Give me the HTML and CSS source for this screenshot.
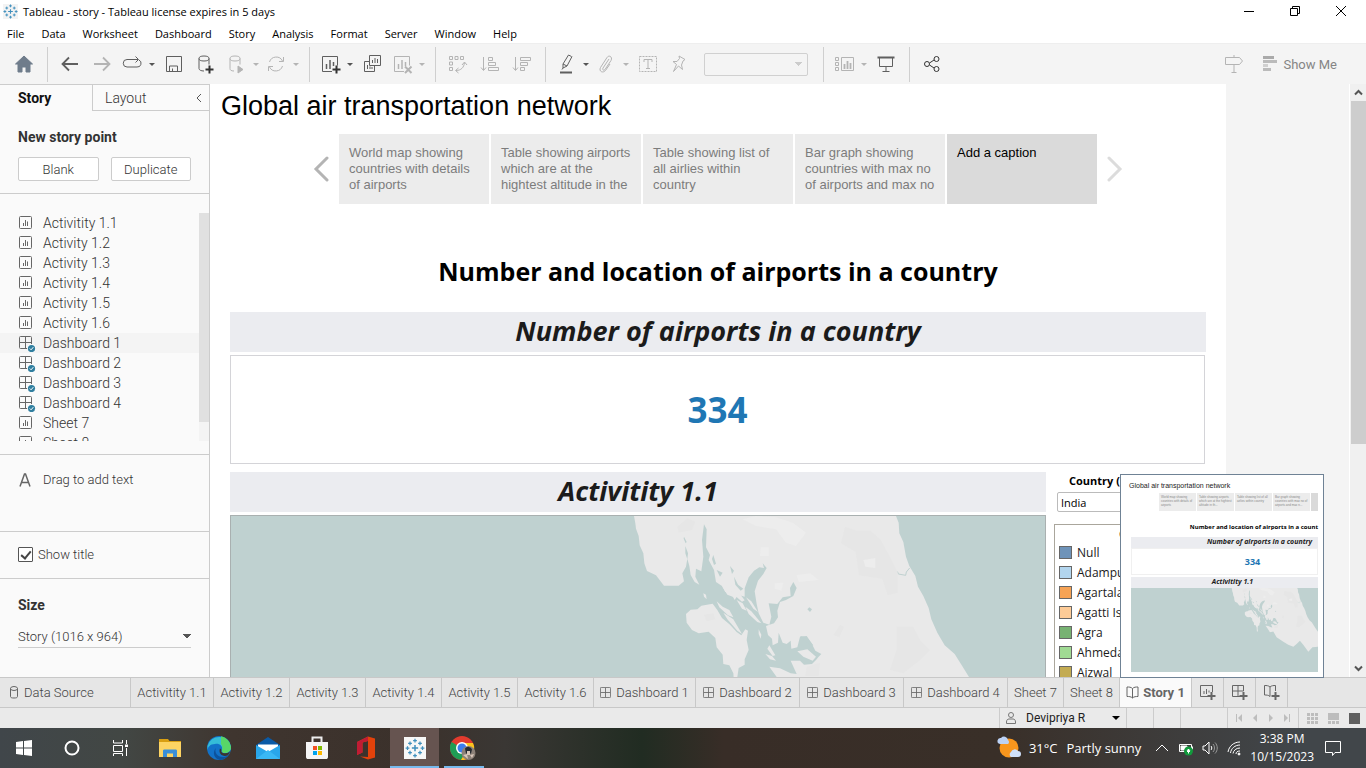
FILE: index.html
```html
<!DOCTYPE html>
<html lang="en">
<head>
<meta charset="utf-8">
<title>Tableau - story</title>
<link rel="stylesheet" href="styles.css">
</head>
<body>
<svg class="defs" aria-hidden="true">
  <defs>
    <g id="i-sheet" fill="none" stroke="#666"><rect x="1.500" y="1.500" width="12" height="12" rx="1"/><path d="M5.500 8v3M7.500 5v6M9.500 6.500v4.500" /></g>
    <g id="i-dash" fill="none" stroke="#666"><rect x="1.500" y="1.500" width="12" height="12" rx="1"/><path d="M7.500 2v11M2 7.500h11"/></g>
    <g id="i-done"><use href="#i-dash"/><circle cx="13.500" cy="13.500" r="4.500" fill="#fafafa"/><circle cx="13.500" cy="13.500" r="3.600" fill="#2f7e9f"/><path d="M11.800 13.500l1.300 1.300 2.200-2.600" fill="none" stroke="#fff"/></g>
    <g id="i-tableau" fill="none" stroke="#3f8fbd"><path d="M8 5.500v5M5.500 8h5" stroke-width="1.200"/><path d="M8 .5v3M6.500 2h3M8 12.500v3M6.500 14h3M2 6.500v3M.5 8h3M14 6.500v3M12.500 8h3M4 2.800v3M2.500 4.300h3M12 2.800v3M10.500 4.300h3M4 10.200v3M2.500 11.700h3M12 10.200v3M10.500 11.700h3"/></g>
    <g id="land">
      <path fill="#e9e9e9" d="M102 168L106 190L108 206L116 228L119 256L130 280L133 310L141 333L168 346L192 377L236 377L252 364L247 340L258 320L262 296L268 318L272 345L284 366L298 374L286 350L288 326L304 334L310 290L306 240L312 193L320 208L318 262L330 285L326 300L342 330L348 366L366 378L376 396L392 398L404 420L414 404L434 410L434 385L446 352L462 332L478 322L492 324L488 310L500 324L490 342L474 362L464 394L470 432L476 460L490 488L508 494L514 470L506 430L532 432L548 412L572 408L570 384L580 366L590 384L580 408L558 420L540 426L532 452L534 472L522 490L498 498L504 525L516 536L518 556L534 548L536 518L548 548L560 552L572 542L574 566L592 562L600 530L620 528L634 548L646 572L664 582L656 590L648 600L636 612L612 614L600 602L572 602L590 642L572 640L540 625L508 620L530 651L560 700L601 690L640 760L721 812L780 850L841 872L880 840L920 800L960 850L1021 932L1070 880L1137 872L1240 900L1240 800L1137 692L1107 651L1088 620L1064 582L1034 556L1012 518L994 478L986 444L970 408L954 380L946 348L928 318L918 290L910 246L898 220L896 188L888 168Z"/>
      <path fill="#e9e9e9" d="M258 462L272 449L292 448L304 437L338 431L352 450L366 474L390 494L410 516L424 526L436 508L444 512L440 540L446 570L434 598L434 614L416 624L412 651L416 690L404 690L400 640L388 616L370 612L368 584L350 562L346 534L326 515L296 520L276 510L260 488Z"/>
      <g fill="#e9e9e9">
        <path d="M310 400l8 4 2 14-8-8zM350 424l18 16 20 10 12 22-16-6-26-24zM366 378l24 10 12 24-20-8zM392 375l24 22 18 24-8 4-30-26zM410 420l18 10 12 22-14-6zM436 440l18 14 30 36-12-4-26-24zM438 412l16 12 20 32-14-10zM392 320l10 14-4 10-8-12zM370 458l30 20 26 44-14-10-30-34zM476 508l8 16-2 12-6-14zM496 582l20 6 12 14-18-4zM508 556l18 30-8 2-16-22zM592 574l30-6 26 22-10 12-28-12zM400 356l16 16 0 14-10-10z"/>
      </g>
      <g fill="#bfd1d0">
        <path d="M252 230l8 16-3 4-6-14zM256 258l8 22-2 18-6-18zM622 448l6-6 8 6-6 8zM340 285l8 26-6 4-6-18zM350 330l18 8-8 12zM600 528l20 4 20 24-6 2-18-16zM390 318l12 14-6 10zM402 350l12 24 16 12-8 6-16-18z"/>
        <path d="M883 334l10 2 2 6 22 4 2-10 10-12" fill="none" stroke="#bfd1d0" stroke-width="3"/>
      </g>
      <g fill="#e6e6e6">
        <path d="M232 200l30-25 24 10-10 25-40 8zM735 200l36 12 40 0 30 26 22 40 30 60v60l-30 8-16-50-70-10-10-70-44-26zM890 500l50 0 20 40 30 30-30 30-50 40-40-10 20-60zM700 525l20-30 12 5-14 32zM312 464l28-4 6 18-26 6zM620 620l40-12-4 40h-40z"/>
      </g>
      <g fill="#ededed"><path d="M428 178l40-10 60 4 50 16 40 30-30 40-30-10-30-40-60-10zM482 262l24 0 0 26-26 0zM590 345l40-5 26 20-60 6zM524 370l26-2-6 24-20-6zM790 300l36-6 0 30-30-4z"/></g>
    </g>
  </defs>
</svg>

<header class="titlebar">
  <svg class="app-icon" viewBox="0 0 16 16"><rect width="16" height="16" fill="#f3f3f3"/><use href="#i-tableau"/></svg>
  <span class="title-text">Tableau - story - Tableau license expires in 5 days</span>
  <button class="win" aria-label="Minimize"><svg viewBox="0 0 12 12"><path d="M1 6.500h10"/></svg></button>
  <button class="win" aria-label="Restore"><svg viewBox="0 0 12 12"><path d="M1.500 3.500h7v7h-7zM3.500 3v-1.500h7v7h-1.500"/></svg></button>
  <button class="win" aria-label="Close"><svg viewBox="0 0 12 12"><path d="M1 1l10 10M11 1L1 11"/></svg></button>
</header>

<nav class="menubar">
  <button>File</button><button>Data</button><button>Worksheet</button><button>Dashboard</button><button>Story</button><button>Analysis</button><button>Format</button><button>Server</button><button>Window</button><button>Help</button>
</nav>

<div class="toolbar">
  <button class="tb" aria-label="Home"><svg viewBox="0 0 20 20"><path d="M10 2l8.500 8H16v8h-4v-5H8v5H4v-8H1.500z" fill="#6f7c8b" stroke="#6f7c8b"/></svg></button>
  <i class="sep"></i>
  <button class="tb" aria-label="Back"><svg viewBox="0 0 20 20"><path d="M18 10H3M9 3.500L2.500 10 9 16.500" stroke-width="1.800"/></svg></button>
  <button class="tb off" aria-label="Forward"><svg viewBox="0 0 20 20"><path d="M2 10h15M11 3.500l6.500 6.500-6.500 6.500" stroke-width="1.800"/></svg></button>
  <button class="tb drop" aria-label="Replay"><svg viewBox="0 0 20 20"><path d="M12 5.500H5a3.700 3.700 0 0 0 0 7.500h10a3.700 3.700 0 0 0 2-7M10 5.500h6M13.500 2.500l3 3-3 3"/></svg></button>
  <button class="tb" aria-label="Save"><svg viewBox="0 0 20 20"><path d="M2.500 2.500h15v15h-15zM5.500 17v-5h8v5M8.500 17v-2.500"/></svg></button>
  <button class="tb" aria-label="New data source"><svg viewBox="0 0 20 20"><ellipse cx="8" cy="4.500" rx="5" ry="2.500"/><path d="M3 4.500v10c0 1.500 2 2.500 5 2.500M13 4.500v6"/><path d="M13.500 11.500v8M9.500 15.500h8" stroke="#333" stroke-width="2"/></svg></button>
  <button class="tb drop off" aria-label="Pause updates"><svg viewBox="0 0 20 20"><ellipse cx="9" cy="4.500" rx="5" ry="2.500"/><path d="M4 4.500v10c0 1.500 1 2.500 4 2.500M14 4.500v6"/><path d="M12 12l5 3.500-5 3.500z" fill="#b4b4b4"/></svg></button>
  <button class="tb drop off" aria-label="Refresh"><svg viewBox="0 0 20 20"><path d="M3.500 8a7 7 0 0 1 13-1M16.500 12a7 7 0 0 1-13 1M17.500 3v4.500H13M2.500 17v-4.500H7"/></svg></button>
  <i class="sep"></i>
  <button class="tb drop" aria-label="New worksheet"><svg viewBox="0 0 20 20"><path d="M12 17.500H2.500v-15h15v9"/><path d="M6.500 10v5M10 6v9M13.500 8v4" stroke-width="1.500"/><path d="M16.500 11.500v8M12.500 15.500h8" stroke="#333" stroke-width="2"/></svg></button>
  <button class="tb" aria-label="Duplicate"><svg viewBox="0 0 20 20"><path d="M7.500 1.500h11v10h-11zM7 7.500H2.500v10h10v-5.500M10.500 6v3M13 4v5M15.500 5v4M5.500 11v4M8 12.500V15M10 13v2"/></svg></button>
  <button class="tb drop off" aria-label="Clear sheet"><svg viewBox="0 0 20 20"><path d="M12 17.500H2.500v-15h15v9"/><path d="M6.500 10v5M10 6v9M13.500 8v4" stroke-width="1.500"/><path d="M13 12.500l6.500 6.500M19.500 12.500L13 19" stroke-width="2"/></svg></button>
  <i class="sep"></i>
  <button class="tb off" aria-label="Swap rows and columns"><svg viewBox="0 0 20 20"><path d="M1.500 2.500h3v3h-3zM7 2.500h3v3H7zM12.500 2.500h3v3h-3zM1.500 8h3v3h-3zM1.500 13.500h3v3h-3zM8 16.500c5 0 8-3 8.500-8M14 11l2.500-3L19 11M10.500 14L7.500 16.500l3 2.500"/></svg></button>
  <button class="tb off" aria-label="Sort ascending"><svg viewBox="0 0 20 20"><path d="M3.500 3v13M1 13.500l2.500 3 2.500-3M8.500 3.500h4v3h-4zM8.500 8.500h7v3h-7zM8.500 13.500h10v3h-10z"/></svg></button>
  <button class="tb off" aria-label="Sort descending"><svg viewBox="0 0 20 20"><path d="M3.500 3v13M1 13.500l2.500 3 2.500-3M8.500 3.500h10v3h-10zM8.500 8.500h7v3h-7zM8.500 13.500h4v3h-4z"/></svg></button>
  <i class="sep"></i>
  <button class="tb drop" aria-label="Highlight"><svg viewBox="0 0 20 20"><path d="M15.500 2.500l-3-1.500-5.500 9v4l4-2 5-9.500M7 10l4 2M7 14l-1 1.500"/><path d="M4 18.500h12" stroke-width="2"/></svg></button>
  <button class="tb drop off" aria-label="Group"><svg viewBox="0 0 20 20"><path d="M13 5l-6 9c-1 2 1 3 2 1.500l6-9c2-3.500-2-6-4-3l-6.500 10c-2 4 2.500 6 5 3L14 10"/></svg></button>
  <button class="tb off" aria-label="Labels"><svg viewBox="0 0 20 20"><path d="M1.500 2.500h17v15h-17z" stroke-dasharray="2 1"/><path d="M6 8V5.500h8V8M10 5.500v9M8 14.500h4"/></svg></button>
  <button class="tb off" aria-label="Pin"><svg viewBox="0 0 20 20"><path d="M9 2l6 3.500-2 1.500-1.500 4 1 4.500L8.500 12l-5 5.500 3-7L3 7.500l4 0 2.500-3z"/></svg></button>
  <select class="fit" aria-label="Fit" disabled><option></option></select>
  <i class="sep"></i>
  <button class="tb drop off" aria-label="Cards"><svg viewBox="0 0 20 20"><path d="M1.500 3.500h3v3h-3zM1.500 8.500h3v3h-3zM1.500 13.500h3v3h-3zM7.500 3.500h12v13h-12z"/><path d="M10.500 10v5M13.500 7v8M16.500 9v6" stroke-width="1.800"/></svg></button>
  <button class="tb" aria-label="Presentation mode"><svg viewBox="0 0 20 20"><path d="M3.500 4v8.500h13V4M10 13v4.500M6.500 17.500h7"/><path d="M1.500 3.500h17" stroke-width="2"/></svg></button>
  <i class="sep"></i>
  <button class="tb" aria-label="Share"><svg viewBox="0 0 20 20" class="share"><circle cx="5" cy="10" r="2.500"/><circle cx="14.500" cy="5" r="2.500"/><circle cx="14.500" cy="15" r="2.500"/><path d="M7.500 9l4.500-3M7.500 11l4.500 3"/></svg></button>
  <button class="tb off guide" aria-label="Data guide"><svg viewBox="0 0 20 20"><path d="M1.500 3.500h14l3 3.500-3 3.500h-14zM10 1v2M10 11v7M7.500 18.500h5"/></svg></button>
  <button class="showme"><svg viewBox="0 0 16 16"><path d="M1 0h11v3H1z" fill="#aaa"/><path d="M1 4h14v3H1zM1 12h8v3H1z" fill="#bbb"/><path d="M1 8h5v3H1z" fill="#d0d0d0"/></svg>Show Me</button>
</div>

<main class="work">
  <aside class="side">
    <div class="side-tabs"><button class="side-tab on">Story</button><button class="side-tab">Layout<svg viewBox="0 0 8 10"><path d="M6 1L2 5l4 4"/></svg></button></div>
    <section class="block new-point">
      <h2>New story point</h2>
      <div class="pair"><button>Blank</button><button>Duplicate</button></div>
    </section>
    <section class="block sheets">
      <ul>
        <li><svg viewBox="0 -1 18 18"><use href="#i-sheet"/></svg>Activitity 1.1</li>
        <li><svg viewBox="0 -1 18 18"><use href="#i-sheet"/></svg>Activity 1.2</li>
        <li><svg viewBox="0 -1 18 18"><use href="#i-sheet"/></svg>Activity 1.3</li>
        <li><svg viewBox="0 -1 18 18"><use href="#i-sheet"/></svg>Activity 1.4</li>
        <li><svg viewBox="0 -1 18 18"><use href="#i-sheet"/></svg>Activity 1.5</li>
        <li><svg viewBox="0 -1 18 18"><use href="#i-sheet"/></svg>Activity 1.6</li>
        <li class="hot"><svg viewBox="0 -1 18 18"><use href="#i-done"/></svg>Dashboard 1</li>
        <li><svg viewBox="0 -1 18 18"><use href="#i-done"/></svg>Dashboard 2</li>
        <li><svg viewBox="0 -1 18 18"><use href="#i-done"/></svg>Dashboard 3</li>
        <li><svg viewBox="0 -1 18 18"><use href="#i-done"/></svg>Dashboard 4</li>
        <li><svg viewBox="0 -1 18 18"><use href="#i-sheet"/></svg>Sheet 7</li>
        <li><svg viewBox="0 -1 18 18"><use href="#i-sheet"/></svg>Sheet 8</li>
      </ul>
      <div class="mini-scroll"><i></i></div>
    </section>
    <section class="block drag"><svg viewBox="0 0 14 14"><path d="M2 13.500L6.500 1h1L12 13.500M3.500 9.500h7"/></svg>Drag to add text</section>
    <section class="block show"><label><input type="checkbox" checked>Show title</label></section>
    <section class="block size">
      <h2><label for="size">Size</label></h2>
      <select id="size"><option>Story (1016 x 964)</option></select>
    </section>
  </aside>

  <div class="stage">
    <article class="story">
      <h1>Global air transportation network</h1>
      <div class="points">
        <button class="arrow" aria-label="Previous"><svg viewBox="0 0 16 26"><path d="M14 2L3 13l11 11"/></svg></button>
        <div class="caps">
          <button class="cap">World map showing countries with details of airports</button>
          <button class="cap">Table showing airports which are at the hightest altitude in the</button>
          <button class="cap">Table showing list of all airlies within country</button>
          <button class="cap">Bar graph showing countries with max no of airports and max no</button>
          <button class="cap on">Add a caption</button>
        </div>
        <button class="arrow next" aria-label="Next"><svg viewBox="0 0 16 26"><path d="M2 2l11 11L2 24"/></svg></button>
      </div>
      <h2 class="big">Number and location of airports in a country</h2>
      <h3 class="bar">Number of airports in a country</h3>
      <div class="kpi">334</div>
      <div class="split">
        <div class="map-col">
          <h3 class="bar">Activitity 1.1</h3>
          <div class="map"><svg viewBox="-1107 168 2442 1200" preserveAspectRatio="xMidYMin slice"><use href="#land"/></svg></div>
        </div>
        <div class="filters">
          <label for="country">Country (</label>
          <select id="country"><option>India</option></select>
          <div class="legend">
            <p>C</p>
            <ul>
              <li><i class="sw c1"></i>Null</li>
              <li><i class="sw c2"></i>Adampur</li>
              <li><i class="sw c3"></i>Agartala</li>
              <li><i class="sw c4"></i>Agatti Is</li>
              <li><i class="sw c5"></i>Agra</li>
              <li><i class="sw c6"></i>Ahmeda</li>
              <li><i class="sw c7"></i>Aizwal</li>
            </ul>
          </div>
        </div>
      </div>
    </article>
  </div>
  <div class="scroll">
    <svg viewBox="0 0 9 6"><path d="M1 5l3.500-3.500L8 5"/></svg>
    <i></i>
    <svg viewBox="0 0 9 6"><path d="M1 1l3.500 3.500L8 1"/></svg>
  </div>
</main>

<nav class="tabs">
  <button class="tab src"><svg viewBox="0 0 12 15"><ellipse cx="6" cy="3.500" rx="3.500" ry="2"/><path d="M2.500 3.500v8c0 1 1 1.500 3.500 1.500s3.500-.5 3.500-1.500v-8"/></svg>Data Source</button>
  <button class="tab first">Activitity 1.1</button>
  <button class="tab">Activity 1.2</button>
  <button class="tab">Activity 1.3</button>
  <button class="tab">Activity 1.4</button>
  <button class="tab">Activity 1.5</button>
  <button class="tab">Activity 1.6</button>
  <button class="tab dash one"><svg viewBox="1 1 13 13"><use href="#i-dash"/></svg>Dashboard 1</button>
  <button class="tab dash"><svg viewBox="1 1 13 13"><use href="#i-dash"/></svg>Dashboard 2</button>
  <button class="tab dash"><svg viewBox="1 1 13 13"><use href="#i-dash"/></svg>Dashboard 3</button>
  <button class="tab dash"><svg viewBox="1 1 13 13"><use href="#i-dash"/></svg>Dashboard 4</button>
  <button class="tab sheet">Sheet 7</button>
  <button class="tab sheet">Sheet 8</button>
  <div class="tab-wrap">
    <button class="tab story-tab"><svg viewBox="0 0 13 13"><path d="M6.500 2.500C5 1 3 1 1 1v9.500c2 0 4 0 5.500 1.500C8 10.500 10 10.500 12 10.500V1c-2 0-4 0-5.500 1.500zV12"/></svg>Story 1</button>
    <div class="preview">
      <p class="p-title">Global air transportation network</p>
      <div class="p-caps">
        <p>World map showing countries with details of airports</p><p>Table showing airports which are at the hightest altitude in th...</p><p>Table showing list of all airlies within country</p><p>Bar graph showing countries with max no of airports and max n...</p><i></i>
      </div>
      <p class="p-big">Number and location of airports in a count</p>
      <p class="p-bar wide">Number of airports in a country</p>
      <p class="p-kpi">334</p>
      <p class="p-bar">Activitity 1.1</p>
      <div class="p-map"><svg viewBox="-1107 168 2244 1008" preserveAspectRatio="xMidYMin slice"><use href="#land"/></svg></div>
    </div>
  </div>
  <button class="tab add" aria-label="New worksheet"><svg viewBox="0 0 17 17"><path d="M9 12.500H1.500v-11h12V8M5 7v3M7.500 5v5M10 6.500v2"/><path d="M12.500 8v8M8.500 12h8" stroke-width="2"/></svg></button>
  <button class="tab add" aria-label="New dashboard"><svg viewBox="0 0 17 17"><path d="M9 12.500H1.500v-11h11V7M1.500 7h11M7 1.500v11"/><path d="M12.500 8v8M8.500 12h8" stroke-width="2"/></svg></button>
  <button class="tab add" aria-label="New story"><svg viewBox="0 0 17 17"><path d="M7 3C5.500 1.500 3.500 1.500 1.500 1.500v9.500c2 0 4 0 5.500 1.500V3c1.500-1.500 3.500-1.500 5.500-1.500V7"/><path d="M12.500 8v8M8.500 12h8" stroke-width="2"/></svg></button>
</nav>

<footer class="status">
  <button class="user"><svg viewBox="0 0 12 14"><circle cx="6" cy="4" r="2.500"/><path d="M1.500 12.500V11c0-2 1-3 2.500-3h4c1.500 0 2.500 1 2.500 3v1.500z"/></svg><span>Devipriya R</span><i class="caret"></i></button>
  <i class="cell"></i><i class="cell"></i><i class="cell wide"></i>
  <div class="cell nav">
    <svg viewBox="0 0 8 8"><path d="M1 0h1v8H1zM7 0v8L3 4z"/></svg><svg viewBox="0 0 8 8"><path d="M6 0v8L2 4z"/></svg><svg viewBox="0 0 8 8"><path d="M2 0v8l4-4z"/></svg><svg viewBox="0 0 8 8"><path d="M6 0h1v8H6zM1 0v8l4-4z"/></svg>
  </div>
  <div class="cell views">
    <svg viewBox="0 0 11 11"><path d="M0 0h3v3H0zM4 0h3v3H4zM8 0h3v3H8zM0 4h3v3H0zM4 4h3v3H4zM8 4h3v3H8zM0 8h3v3H0zM4 8h3v3H4zM8 8h3v3H8z"/></svg>
    <svg viewBox="0 0 11 11"><path d="M0 0h11v7H0zM0 8h3v3H0zM4 8h3v3H4zM8 8h3v3H8z"/></svg>
    <svg viewBox="0 0 11 11" class="dark"><path d="M0 0h11v11H0z"/></svg>
  </div>
</footer>

<div class="taskbar">
  <button class="task" aria-label="Start"><svg viewBox="0 0 24 24" fill="#fff"><path d="M4 6l7-1v6.500H4zM12 5l8-1v7.500h-8zM4 12.500h7V19l-7-1zM12 12.500h8V20l-8-1z"/></svg></button>
  <button class="task" aria-label="Search"><svg viewBox="0 0 24 24"><circle cx="12" cy="12" r="6.500" fill="none" stroke="#fff" stroke-width="2"/></svg></button>
  <button class="task" aria-label="Task view"><svg viewBox="0 0 24 24" fill="none" stroke="#fff"><path d="M4.500 4v3h9V4M4.500 9.500h9v6h-9zM4.500 20v-2.500h9V20M17.500 4v4M17.500 12v8"/><path d="M16 8.500h3v2.500h-3z" fill="#fff" stroke="none"/></svg></button>
  <button class="task" aria-label="File Explorer"><svg viewBox="0 0 24 24"><path d="M1 3h9l1.500 2H23v3H1z" fill="#d99f12"/><path d="M1 6h22v15H1z" fill="#fdd463"/><path d="M5 21v-6c0-1 .5-1.500 1.500-1.500h11c1 0 1.500.5 1.500 1.500v6h-4v-3.500H9V21z" fill="#3a8fd8"/></svg></button>
  <button class="task" aria-label="Edge"><svg viewBox="0 0 24 24"><circle cx="12" cy="12" r="12" fill="#1272c8"/><path d="M.5 10A12 12 0 0 1 24 11c0 4-3 6-6 6-2 0-4-1-3-3C16 10 12 7 8 8 3 8 1 11 .5 14z" fill="#35bdd8"/><path d="M14 .2A12 12 0 0 1 24 11c0 4-3 6-6 6s-3.500-1.500-3-3c1-3 0-5-1-6z" fill="#58d668"/><path d="M9 12c-2 4 1 9 7 9 2 0 4-.5 5.500-2A12 12 0 0 1 13 24C7 23 5 16 9 12z" fill="#0c529c"/><path d="M14.500 14c-1 2 1 3.500 4 3.300 2 0 3.500-.8 4.500-2-.5 1.800-1 2.700-2 4-5 2-10-1-8-7z" fill="#3b342f"/></svg></button>
  <button class="task" aria-label="Mail"><svg viewBox="0 0 24 24"><path d="M0 9l12-8 12 8v4H0z" fill="#0a5aa6"/><path d="M2 8.500h20v7H2z" fill="#fff"/><path d="M0 9l12 7 12-7v14H0z" fill="#29a6ea"/><path d="M0 23l12-9 12 9z" fill="#3ab8f4"/></svg></button>
  <button class="task" aria-label="Store"><svg viewBox="0 0 24 24"><path d="M7.500 7V1.500h9V7" fill="none" stroke="#eee" stroke-width="2"/><path d="M1 6h22v15c0 1.500-1 2-2 2H3c-1 0-2-.5-2-2z" fill="#f5f5f5"/><path d="M8 10h4v4H8z" fill="#f25022"/><path d="M13 10h4v4h-4z" fill="#7fba00"/><path d="M8 15h4v4H8z" fill="#00a4ef"/><path d="M13 15h4v4h-4z" fill="#ffb900"/></svg></button>
  <button class="task" aria-label="Office"><svg viewBox="0 0 24 24"><path d="M14 .5l7 2v19l-7 2-8-3 8 .5V5L8.500 6.500v10L3 19V6z" fill="#e2420b"/><path d="M14 .5V5L8.500 6.500v10L3 19V6z" fill="#c01c34"/></svg></button>
  <button class="task active" aria-label="Tableau"><svg viewBox="0 0 24 24"><rect x="1" y="1" width="22" height="22" fill="#f7f7f7"/><g transform="translate(2 2) scale(1.250)"><use href="#i-tableau"/></g></svg></button>
  <button class="task open" aria-label="Chrome"><svg viewBox="0 0 27 24"><circle cx="12" cy="12" r="12" fill="#e33b2e"/><path d="M1.600 6A12 12 0 0 0 11 24l5.500-9z" fill="#1f9d55"/><path d="M12 7h11a12 12 0 0 1-12 17l6-10z" fill="#fcc31e"/><circle cx="12" cy="12" r="6" fill="#fff"/><circle cx="12" cy="12" r="4.500" fill="#3b7ded"/><circle cx="18.500" cy="17" r="7" fill="#8c8178"/><path d="M15 12.500a4 4 0 0 1 7 1l-1 4h-5z" fill="#252a30"/><path d="M17 15h3v4h-3zM13 19l4-1 1 5zM20 19l4-1-2 4z" fill="#d9c7ba"/></svg></button>
  <div class="tray">
    <button class="weather"><svg viewBox="0 0 24 24"><circle cx="12" cy="12" r="9.500" fill="#f8961d"/><path d="M3 8a3 3 0 0 1 1-6 4 4 0 0 1 7 2 2.500 2.500 0 0 1 0 4z" fill="#bcd2f5"/><path d="M14 21a3 3 0 0 1 0-5 4 4 0 0 1 7-1 3 3 0 0 1 0 6z" fill="#cfe0fa"/></svg><span>31°C</span><span>Partly sunny</span></button>
    <svg class="t-ico" viewBox="0 0 14 16"><path d="M1 11l6-6 6 6"/></svg>
    <svg class="t-ico" viewBox="0 0 16 16"><path d="M1.500 4.500h12v7h-12zM14.500 6.500v3"/><path d="M3 6h6v4H3z" fill="#fff"/><circle cx="10.500" cy="11" r="4.500" fill="#129a3c" stroke="none"/><path d="M10.500 13.500V9l1.500 2-1.500 1.500L9 11l1.500-2" /></svg>
    <svg class="t-ico" viewBox="0 0 16 16"><path d="M1 6h2l4-4v12l-4-4H1zM9 6c1 1 1 3 0 4"/><path d="M11 4c2 2 2 6 0 8M13 2.500c3 3 3 8 0 11" stroke="#999"/></svg>
    <svg class="t-ico" viewBox="0 0 14 16"><path d="M1 12C2 6 7 2 13 2M3.500 13C4 8.500 8 5 13 5M6 13.500C6.500 10.500 9 8 13 8M9 14c0-2 1.500-3 4-3"/><circle cx="12" cy="14" r="1" fill="#fff"/></svg>
    <div class="clock"><span>3:38 PM</span><span>10/15/2023</span></div>
    <svg class="t-ico note" viewBox="0 0 18 18"><path d="M1.500 2.500h15v11H11l-2.500 3v-3h-7z"/></svg>
  </div>
</div>
</body>
</html>
```
FILE: styles.css
```css
* { box-sizing: border-box; }
body {
  margin: 0;
  height: 100vh;
  display: flex;
  flex-direction: column;
  overflow: hidden;
  background: #fff;
  color: #000;
  font: 13px Roboto, "Liberation Sans", sans-serif;
}
h1, h2, h3, p, ul { margin: 0; padding: 0; font-weight: inherit; }
ul { list-style: none; }
button, select { font: inherit; color: inherit; border: 0; background: none; padding: 0; border-radius: 0; }
svg { display: block; flex: none; }
i { font-style: normal; }
.defs { position: absolute; width: 0; height: 0; }

/* window chrome */
.titlebar { height: 24px; flex: none; display: flex; align-items: center; padding: 0 2px 2px 3px; font: 11px "Open Sans", sans-serif; }
.app-icon { width: 15px; height: 15px; margin-right: 5px; }
.title-text { flex: 1; }
.win { width: 46px; height: 20px; display: flex; align-items: center; justify-content: center; }
.win svg { width: 12px; height: 12px; fill: none; stroke: #000; }
.menubar { height: 19px; flex: none; display: flex; align-items: center; gap: 17px; padding-left: 7px; font: 11px "Open Sans", sans-serif; }

.toolbar { height: 41px; flex: none; display: flex; align-items: center; padding-left: 8px; background: #f4f4f4; border-top: 1px solid #eee; }
.tb { width: 32px; height: 32px; display: flex; align-items: center; justify-content: center; flex: none; }
.tb svg { width: 20px; height: 20px; fill: none; stroke: #5f5f5f; overflow: visible; }
.tb.off svg { stroke: #b4b4b4; }
.tb.drop { width: 40px; justify-content: flex-start; padding-left: 4px; gap: 7px; }
.tb.drop::after { content: ""; border: 3px solid transparent; border-top-color: #555; border-bottom: 0; }
.tb.off.drop::after { border-top-color: #b4b4b4; }
.tb .share { stroke: #333; }
.sep { width: 14px; height: 35px; flex: none; display: flex; justify-content: center; }
.sep::before { content: ""; width: 1px; background: #cfcfcf; }
.fit {
  width: 104px;
  height: 23px;
  margin: 0 8px;
  border: 1px solid #d0d0d0;
  border-radius: 2px;
  appearance: none;
  opacity: 1;
  background:
    linear-gradient(45deg, transparent 50%, #ccc 50%) no-repeat right 9px center / 4px 4px,
    linear-gradient(-45deg, transparent 50%, #ccc 50%) no-repeat right 5px center / 4px 4px;
}
.guide { margin-left: auto; }
.showme { display: flex; align-items: center; gap: 5px; margin: 0 29px 0 12px; font-size: 13px; color: #858585; }
.showme svg { width: 16px; height: 16px; }

/* work area */
.work { flex: 1; min-height: 0; display: flex; }
.side { width: 210px; flex: none; background: #fafafa; border-right: 1px solid #ccc; border-top: 1px solid #ccc; color: #333; font-weight: 300; overflow: hidden; }
.side-tabs { display: flex; height: 26px; font-size: 14px; }
.side-tab { width: 92px; padding-left: 18px; text-align: left; }
.side-tab.on { font-weight: 700; color: #111; }
.side-tab:last-child { flex: 1; padding: 0 6px 0 12px; display: flex; align-items: center; justify-content: space-between; border: solid #ccc; border-width: 0 0 1px 1px; }
.side-tab svg { width: 8px; height: 10px; fill: none; stroke: #555; }
.block { border-bottom: 1px solid #ccc; }
.side h2 { font-size: 14px; line-height: 16px; font-weight: 700; color: #333; }
.new-point { padding: 18px 18px 13px; height: 83px; }
.pair { display: grid; grid-template-columns: 1fr 1fr; gap: 12px; margin-top: 12px; }
.pair button { height: 24px; border: 1px solid #ccc; border-radius: 2px; background: #fff; }
.sheets { display: flex; height: 261px; padding: 19px 0 13px; }
.sheets ul { flex: 1; overflow: hidden; font-size: 14px; }
.sheets li { display: flex; align-items: center; gap: 7px; height: 20px; padding-left: 18px; }
.sheets li.hot { background: #f4f4f4; }
.sheets svg { width: 18px; height: 18px; }
.mini-scroll { width: 10px; background: #f4f4f4; }
.mini-scroll i { display: block; height: 209px; background: #e0e0e0; }
.drag { display: flex; align-items: flex-start; gap: 11px; height: 77px; padding: 17px 18px; line-height: 16px; }
.drag svg { width: 14px; height: 16px; fill: none; stroke: #666; stroke-width: 1.5; }
.show { height: 47px; display: flex; align-items: center; padding: 0 0 2px 18px; }
.show label { display: flex; align-items: center; gap: 5px; }
.show input { appearance: none; margin: 0; width: 15px; height: 15px; border: 1px solid #555; border-radius: 1px; background: #fff; display: grid; place-items: center; }
.show input:checked::before { content: ""; width: 4px; height: 8px; border: solid #444; border-width: 0 2px 2px 0; transform: rotate(40deg); }
.size { border: 0; padding: 18px 18px 0; }
#size { width: 100%; height: 23px; margin-top: 12px; border-bottom: 1px solid #ccc; appearance: none; background: linear-gradient(45deg, transparent 50%, #555 50%) no-repeat right 4px center / 4px 4px, linear-gradient(-45deg, transparent 50%, #555 50%) no-repeat right 0 center / 4px 4px; }

.stage { flex: 1; min-width: 0; overflow: hidden; background: #f4f4f4; }
.story { width: 1016px; min-height: 100%; padding: 0 20px; background: #fff; }
.story h1 { margin-left: -9px; padding-top: 7px; font: 27px/31px "Liberation Sans", Arial, sans-serif; }
.points { display: flex; justify-content: center; align-items: center; gap: 10px; margin-top: 12px; }
.arrow svg { width: 16px; height: 26px; fill: none; stroke: #b4b4b4; stroke-width: 3; stroke-linecap: round; }
.arrow.next svg { stroke: #dcdcdc; }
.caps { display: grid; grid-template-columns: repeat(5, 150px); gap: 2px; }
.cap { height: 70px; padding: 11px 8px 0 10px; text-align: left; background: #ececec; color: #7c7c7c; font: 13px/16px "Liberation Sans", Arial, sans-serif; display: flex; align-items: flex-start; }
.cap.on { background: #dadada; color: #000; }
.big, .bar, .kpi { font-family: "Open Sans", "Noto Sans", sans-serif; font-weight: 700; text-align: center; }
.big { margin-top: 47px; font-size: 25px; line-height: 40px; }
.bar { padding-bottom: 2px; background: #ebecf0; color: #1b1b1b; font-size: 27px; font-style: italic; line-height: 38px; }
.big + .bar { margin-top: 21px; }
.kpi { height: 109px; margin: 3px 1px 8px 0; display: flex; align-items: center; justify-content: center; border: 1px solid #d4d4d8; color: #1f77b4; font-size: 35px; }
.split { display: flex; gap: 8px; }
.map-col { flex: 1; min-width: 0; }
.map { height: 400px; margin-top: 3px; border: 1px solid #a9b0b0; background: #bfd1d0; }
.map svg { width: 100%; height: 100%; }
.filters { width: 152px; flex: none; font: 12px "Open Sans", "Noto Sans", sans-serif; }
.filters > label { display: block; padding-left: 15px; font-size: 11px; font-weight: 700; line-height: 18px; }
#country { display: block; width: 146px; height: 20px; margin: 2px 0 12px 3px; padding-left: 3px; border: 1px solid #bbb; border-radius: 2px; background: #fff; font-size: 11px; appearance: none; }
.legend { border: 1px solid #aaa69c; padding: 0 4px; height: 200px; color: #1b1b1b; }
.legend p { padding-left: 60px; line-height: 17px; font-size: 11px; }
.legend li { display: flex; align-items: center; gap: 5px; height: 20px; white-space: nowrap; }
.sw { width: 13px; height: 13px; border: 1px solid #666; }
.c1 { background: #6e93b9; } .c2 { background: #b2d5ee; } .c3 { background: #f6a355; } .c4 { background: #fdcb97; }
.c5 { background: #77b272; } .c6 { background: #a0da93; } .c7 { background: #c3ab52; }
.scroll { width: 17px; flex: none; display: flex; flex-direction: column; align-items: center; background: #f0f0f0; border-left: 1px solid #fff; padding: 5px 0; }
.scroll svg { width: 9px; height: 7px; fill: none; stroke: #555; stroke-width: 2; }
.scroll i { width: 15px; height: 343px; margin: 5px 0 auto; background: #cdcdcd; }

/* sheet tabs */
.tabs { flex: none; height: 31px; display: flex; background: #e6e6e6; border: solid #c8c8c8; border-width: 1px 0; color: #444; font-weight: 300; }
.tab { width: 76px; height: 29px; flex: none; border-right: 1px solid #c8c8c8; display: flex; align-items: center; justify-content: center; gap: 5px; white-space: nowrap; }
.tab svg { width: 13px; height: 13px; fill: none; stroke: #666; }
.tab.src { width: 131px; justify-content: flex-start; padding-left: 8px; gap: 4px; }
.tab.src svg { width: 12px; height: 15px; }
.tab.first { width: 83px; }
.tab.dash { width: 104px; }
.tab.dash svg { width: 11px; height: 11px; }
.tab.dash.one { width: 102px; }
.tab.sheet { width: 56px; }
.tab-wrap { position: relative; }
.tab.story-tab { width: 72px; background: #fafafa; color: #666; font-weight: 700; gap: 4px; }
.tab.add { width: 32px; }
.tab.add svg { width: 17px; height: 17px; }

.preview { position: absolute; left: 0; bottom: 100%; width: 204px; height: 204px; padding: 7px 5px 0 10px; background: #fff; border: 1px solid #6f8295; overflow: hidden; color: #1b1b1b; }
.preview p { white-space: nowrap; }
.preview .p-title { font: 7px/8px "Liberation Sans", sans-serif; margin-left: -2px; }
.p-caps { display: grid; grid-template-columns: repeat(4, 37px) 7px; gap: 1px; justify-content: end; margin-top: 3px; }
.preview .p-caps p { height: 18px; padding: 2px; white-space: normal; background: #ececec; color: #888; font: 3px/4px "Liberation Sans", sans-serif; }
.p-caps i { background: #dadada; }
.p-big, .p-bar, .p-kpi { font-family: "Open Sans", "Noto Sans", sans-serif; font-weight: 700; }
.p-big { margin-top: 11px; font-size: 6px; line-height: 10px; text-align: right; color: #000; }
.p-bar { margin-top: 5px; height: 11px; padding: 0 19px 0 35px; background: #ebecf0; font-size: 7px; line-height: 10px; font-style: italic; text-align: center; }
.p-bar.wide { padding-left: 76px; }
.p-kpi { height: 27px; border: 1px solid #f0f0f0; padding-left: 56px; text-align: center; font-size: 9px; line-height: 26px; color: #1f77b4; }
.p-kpi + .p-bar { margin-top: 2px; }
.p-map { height: 84px; background: #bfd1d0; }
.p-map svg { width: 100%; height: 100%; }

.status { flex: none; height: 20px; display: flex; justify-content: flex-end; background: #eaeaea; }
.user { width: 127px; display: flex; align-items: center; padding-left: 5px; border-left: 1px solid #ccc; font-size: 12px; color: #222; }
.user svg { width: 12px; height: 14px; fill: none; stroke: #777; margin-right: 9px; }
.user span { flex: 1; text-align: left; }
.caret { border: 4px solid transparent; border-top-color: #000; border-bottom: 0; margin-right: 6px; }
.cell { width: 27px; border-left: 1px solid #ccc; }
.cell.wide { width: 47px; }
.cell svg { fill: #bdbdbd; }
.cell.nav { width: 71px; display: flex; align-items: center; padding-left: 7px; gap: 8px; }
.nav svg { width: 8px; height: 8px; }
.cell.views { width: 68px; display: flex; align-items: center; padding-left: 8px; gap: 10px; }
.views svg { width: 11px; height: 11px; }
.views .dark { fill: #5f5f5f; }

.taskbar { flex: none; height: 40px; display: flex; background: linear-gradient(90deg, #40464a 0%, #424744 9%, #3f352f 17%, #3b312b 30%, #3a3734 37%, #212c22 47%, #382d27 53%, #392f28 73%, #41464a 95%); color: #fff; font-family: "Open Sans", "Noto Sans", sans-serif; }
.task { width: 49px; height: 40px; flex: none; display: flex; align-items: center; justify-content: center; border: solid transparent; border-width: 2px 0; }
.task:first-child { width: 47px; }
.task svg { width: 24px; height: 24px; }
.task.active { background: #665450; border-bottom-color: #76b9ed; }
.task.open { background: linear-gradient(#76b9ed, #76b9ed) no-repeat center bottom / 40px 2px; background-origin: border-box; background-clip: border-box; }
.task.open svg { width: 27px; }
.tray { margin-left: auto; display: flex; align-items: center; padding-right: 24px; }
.weather { display: flex; align-items: center; gap: 9px; font-size: 13px; margin-right: 13px; }
.weather svg { width: 24px; height: 24px; margin-right: -1px; }
.t-ico { height: 16px; width: 16px; fill: none; stroke: #fff; margin-right: 8px; }
.clock { display: flex; flex-direction: column; align-items: center; font-size: 12px; line-height: 18px; }
.note { width: 18px; height: 18px; margin: 0 0 0 10px; }
```
